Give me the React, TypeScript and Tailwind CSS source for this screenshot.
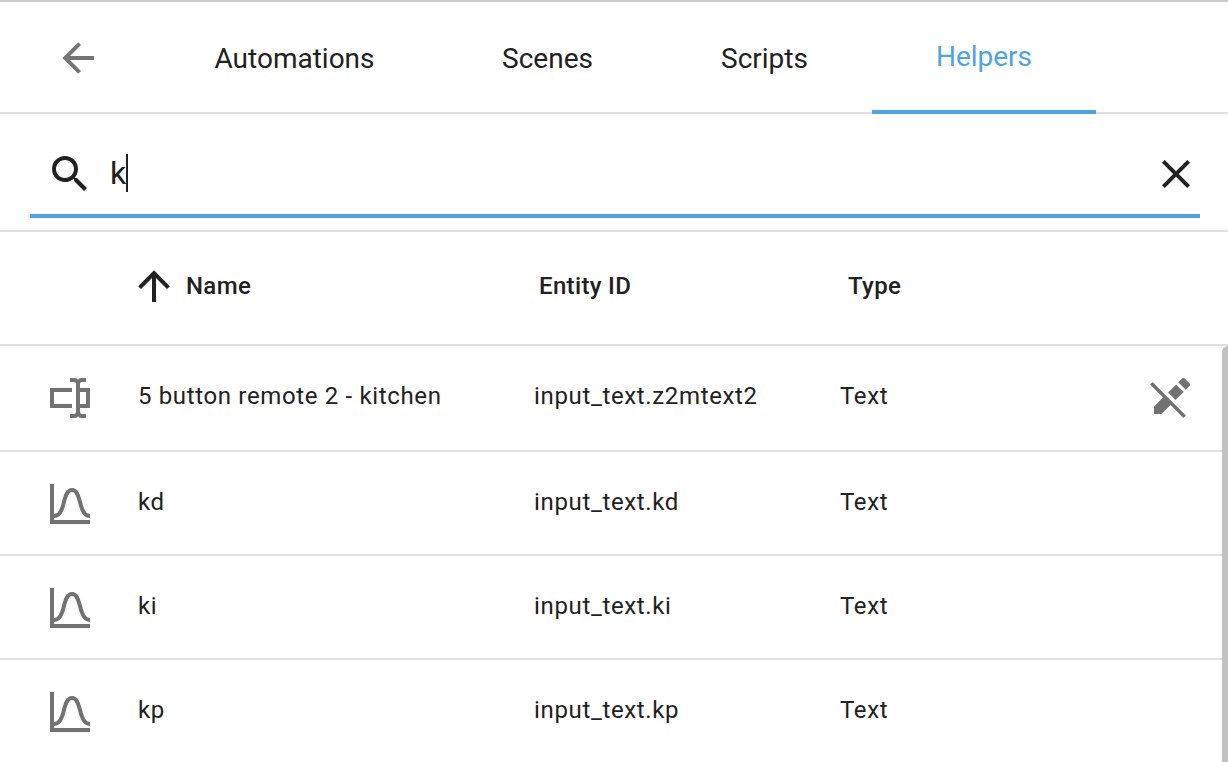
const paths = {
  back: "M20,11V13H8L13.5,18.5L12.08,19.92L4.16,12L12.08,4.08L13.5,5.5L8,11H20Z",
  up: "M13,20H11V8L5.5,13.5L4.08,12.08L12,4.16L19.92,12.08L18.5,13.5L13,8V20Z",
  search:
    "M9.5,3A6.5,6.5 0 0,1 16,9.5C16,11.11 15.41,12.59 14.44,13.73L14.71,14H15.5L20.5,19L19,20.5L14,15.5V14.71L13.73,14.44C12.59,15.41 11.11,16 9.5,16A6.5,6.5 0 0,1 3,9.5A6.5,6.5 0 0,1 9.5,3M9.5,5C7,5 5,7 5,9.5C5,12 7,14 9.5,14C12,14 14,12 14,9.5C14,7 12,5 9.5,5Z",
  close:
    "M19,6.41L17.59,5L12,10.59L6.41,5L5,6.41L10.59,12L5,17.59L6.41,19L12,13.41L17.59,19L19,17.59L13.41,12L19,6.41Z",
  textbox:
    "M17,7H22V17H17V19A1,1 0 0,0 18,20H20V22H17.5C16.95,22 16,21.55 16,21C16,21.55 15.05,22 14.5,22H12V20H14A1,1 0 0,0 15,19V5A1,1 0 0,0 14,4H12V2H14.5C15.05,2 16,2.45 16,3C16,2.45 16.95,2 17.5,2H20V4H18A1,1 0 0,0 17,5V7M2,7H13V9H4V15H13V17H2V7M20,15V9H17V15H20Z",
  curve:
    "M9.96,11.31C10.82,8.1 11.5,6 13,6C14.5,6 15.18,8.1 16.04,11.31C17,14.92 18.1,19 22,19V17C19.8,17 19,14.54 17.97,10.8C17.08,7.46 16.15,4 13,4C9.85,4 8.92,7.46 8.03,10.8C7.03,14.54 6.2,17 4,17V2H2V22H22V20H4V19C7.9,19 9,14.92 9.96,11.31Z",
  pencilOff:
    "M18.66,2C18.4,2 18.16,2.09 17.97,2.28L16.13,4.13L19.88,7.88L21.72,6.03C22.11,5.64 22.11,5 21.72,4.63L19.38,2.28C19.18,2.09 18.91,2 18.66,2M3.28,4L2,5.28L8.5,11.75L4,16.25V20H7.75L12.25,15.5L18.72,22L20,20.72L13.5,14.25L9.75,10.5L3.28,4M15.06,5.19L11.03,9.22L14.78,12.97L18.81,8.94L15.06,5.19Z",
};

function Icon({ name, className = "" }: { name: keyof typeof paths; className?: string }) {
  return (
    <svg viewBox="0 0 24 24" className={`size-12 shrink-0 fill-current ${className}`} aria-hidden="true">
      <path d={paths[name]} />
    </svg>
  );
}

type Row = { icon: "textbox" | "curve"; name: string; entity: string; type: string; locked?: boolean };

const rows: Row[] = [
  { icon: "textbox", name: "5 button remote 2 - kitchen", entity: "input_text.z2mtext2", type: "Text", locked: true },
  { icon: "curve", name: "kd", entity: "input_text.kd", type: "Text" },
  { icon: "curve", name: "ki", entity: "input_text.ki", type: "Text" },
  { icon: "curve", name: "kp", entity: "input_text.kp", type: "Text" },
];

function Tab({ label, className }: { label: string; className: string }) {
  return <button className={`flex h-28 items-center justify-center pt-0.5 ${className}`}>{label}</button>;
}

export default function App() {
  return (
    <div className="flex h-[762px] w-[1228px] flex-col overflow-hidden border-t-2 border-[#cccccc] bg-white font-['Roboto',sans-serif] text-[#212121]">
      <header className="flex h-28 shrink-0 border-b-2 border-[#e0e0e0] pl-[54px] text-[28px]">
        <button className="mt-8 h-12 text-[#757575]">
          <Icon name="back" />
        </button>
        <nav className="ml-12 flex">
          <Tab label="Automations" className="w-[288px] pl-px" />
          <Tab label="Scenes" className="w-[218px] pl-px" />
          <Tab label="Scripts" className="w-[216px] pl-px" />
          <Tab label="Helpers" className="w-[224px] border-b-4 border-[#4ea3e8] text-[#4ea3e8]" />
        </nav>
      </header>

      <div className="h-[118px] shrink-0 border-b-2 border-[#e0e0e0] pr-7 pl-[30px]">
        <div className="flex h-[104px] items-start border-b-4 border-[#4ea3e8] pt-9 pl-4">
          <Icon name="search" />
          <div className="ml-4 flex h-12 items-center">
            <span className="w-4 pb-0.5 text-[32px] leading-[46px]">k</span>
            <span className="-mt-0.5 h-[38px] w-0.5 bg-[#212121]" />
          </div>
          <button className="ml-auto">
            <Icon name="close" />
          </button>
        </div>
      </div>

      <div className="flex h-[114px] shrink-0 items-center border-b-2 border-[#e0e0e0] pb-1 text-2xl font-medium tracking-[0.34px]">
        <div className="ml-[130px] flex w-[409px] items-center">
          <Icon name="up" />
          <span className="ml-2">Name</span>
        </div>
        <div className="w-[309px]">Entity ID</div>
        <div>Type</div>
      </div>

      <div className="flex min-h-0 flex-1">
        <div className="w-[1222px]">
          {rows.map((row, i) => (
            <div
              key={row.name}
              className={`flex items-center border-b-2 border-[#e0e0e0] pl-[46px] text-2xl tracking-[0.65px] ${i === 0 ? "h-[106px]" : "h-[104px] pt-0.5"}`}
            >
              <Icon name={row.icon} className="text-[#727272]" />
              <div className="ml-11 w-[396px] pb-1">{row.name}</div>
              <div className="w-[306px] pb-1">{row.entity}</div>
              <div className="w-[306px] pb-1">{row.type}</div>
              {row.locked && <Icon name="pencilOff" className="text-[#727272]" />}
            </div>
          ))}
        </div>
        <div className="w-1.5 rounded-tl-md bg-[#c1c1c1]" />
      </div>
    </div>
  );
}
